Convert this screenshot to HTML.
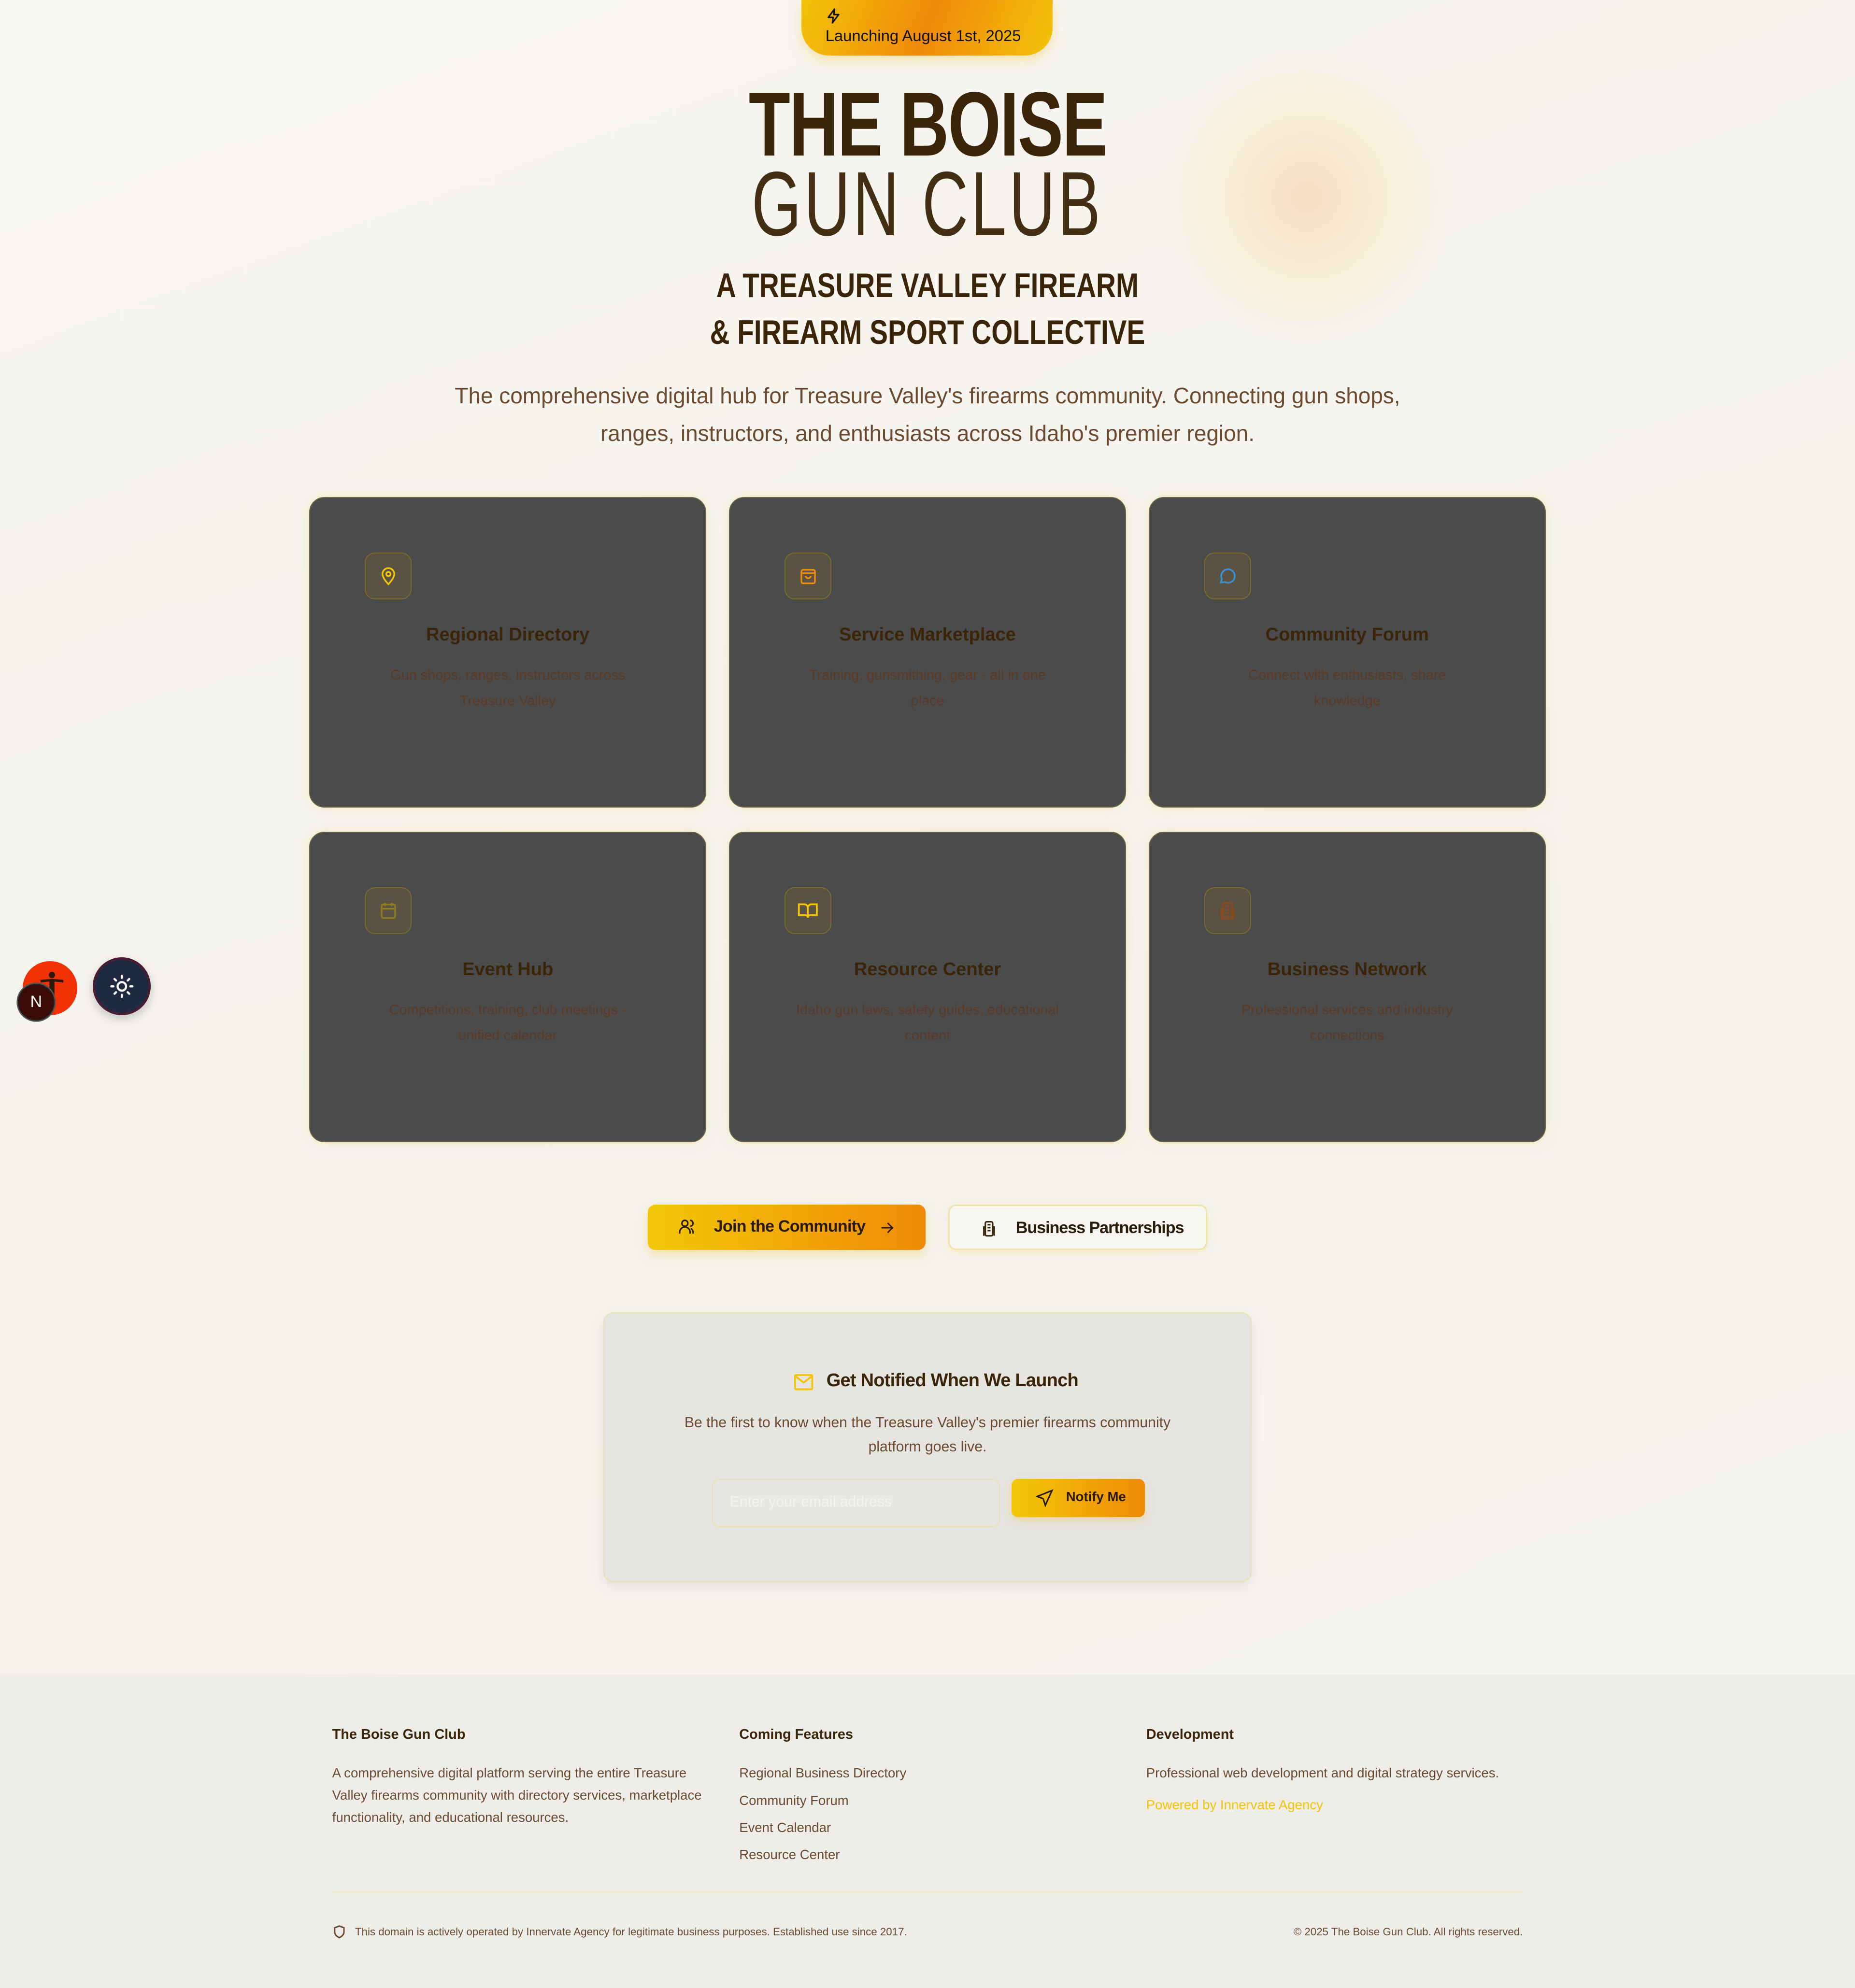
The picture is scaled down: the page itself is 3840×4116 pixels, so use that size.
<!DOCTYPE html>
<html><head><meta charset="utf-8">
<style>
*{box-sizing:border-box;margin:0;padding:0}
html,body{width:3840px;height:4116px;overflow:hidden;background:#f7f5ef}
#z{zoom:2.62474;width:1463px;height:1568px;position:relative;font-family:"Liberation Sans",sans-serif;background:linear-gradient(160deg,#f8f6f0,#f5f3ec 60%,#f7f5ef);overflow:hidden}
.abs{position:absolute}
.c{text-align:center}
.badge{left:632px;top:0;width:198px;height:44px;border-radius:0 0 22px 22px;background:linear-gradient(110deg,#f2c40a,#f08a0a 50%,#f2c40a);box-shadow:0 4px 10px rgba(240,190,40,.35)}
.sq{display:inline-block;transform-origin:center}
.card{width:313px;height:245px;background:#4b4b4b;border-radius:12px;border:1px solid #6e6440;box-shadow:0 0 8px rgba(245,220,140,.5)}
.ib{position:absolute;left:43px;top:43px;width:37px;height:37px;border-radius:8px;background:#5a5343;border:1px solid #7b6a2c;display:flex;align-items:center;justify-content:center}
.ct{position:absolute;left:0;right:0;top:100px;text-align:center;font-size:14.5px;font-weight:bold;color:#3a2508}
.cd{position:absolute;left:52px;right:52px;top:130px;text-align:center;font-size:11px;line-height:20px;color:#5a3a22}
.fh{font-size:11px;font-weight:bold;color:#3a2508}
.ft{font-size:10.5px;color:#6b4a30;line-height:17.5px}
</style></head><body><div id="z">
<div class="abs" style="left:910px;top:40px;width:240px;height:230px;border-radius:50%;background:radial-gradient(circle at 50% 50%,rgba(245,200,150,.5),rgba(248,225,170,.3) 40%,rgba(248,240,220,0) 70%)"></div>

<div class="abs badge">
<svg class="abs" style="left:19px;top:6px" width="13" height="13" viewBox="0 0 24 24" fill="none" stroke="#111" stroke-width="2.2" stroke-linejoin="round"><path d="M13 2L4 14h7l-1 8 9-12h-7z"/></svg>
<div class="abs" style="left:19px;top:21px;font-size:12.5px;color:#111;white-space:nowrap">Launching August 1st, 2025</div>
</div>

<div class="abs c" style="left:0;width:1463px;top:62px;font-size:72px;font-weight:bold;color:#3a2508;line-height:72px"><span class="sq" style="transform:scaleX(.745);letter-spacing:-1px">THE BOISE</span></div>
<div class="abs c" style="left:0;width:1463px;top:126px;font-size:72px;color:#3a2508;line-height:70px"><span class="sq" style="transform:scaleX(.7);letter-spacing:3px;font-weight:normal;-webkit-text-stroke:0;opacity:.95">GUN CLUB</span></div>

<div class="abs c" style="left:0;width:1463px;top:207px;font-size:27px;font-weight:bold;color:#3a2508;line-height:37px"><span class="sq" style="transform:scaleX(.8)">A TREASURE VALLEY FIREARM<br>&amp; FIREARM SPORT COLLECTIVE</span></div>

<div class="abs c" style="left:336px;width:791px;top:297px;font-size:17.5px;color:#6b4a30;line-height:30px">The comprehensive digital hub for Treasure Valley's firearms community. Connecting gun shops, ranges, instructors, and enthusiasts across Idaho's premier region.</div>

<!-- cards -->
<div class="abs card" style="left:244px;top:392px"><div class="ib"><svg width="16" height="16" viewBox="0 0 24 24" fill="none" stroke="#f2c40a" stroke-width="2"><path d="M12 22s-7-7-7-12a7 7 0 0 1 14 0c0 5-7 12-7 12z"/><circle cx="12" cy="10" r="2.5"/></svg></div><div class="ct">Regional Directory</div><div class="cd">Gun shops, ranges, instructors across Treasure Valley</div></div>
<div class="abs card" style="left:575px;top:392px"><div class="ib"><svg width="16" height="16" viewBox="0 0 24 24" fill="none" stroke="#f08a0a" stroke-width="2"><rect x="4" y="5" width="16" height="16" rx="2"/><path d="M4 9h16M9 12a3 3 0 0 0 6 0"/></svg></div><div class="ct">Service Marketplace</div><div class="cd">Training, gunsmithing, gear - all in one place</div></div>
<div class="abs card" style="left:906px;top:392px"><div class="ib"><svg width="16" height="16" viewBox="0 0 24 24" fill="none" stroke="#3a8fd0" stroke-width="2"><path d="M4 20l1.5-4A8 8 0 1 1 9 19.5z"/></svg></div><div class="ct">Community Forum</div><div class="cd">Connect with enthusiasts, share knowledge</div></div>
<div class="abs card" style="left:244px;top:656px"><div class="ib"><svg width="16" height="16" viewBox="0 0 24 24" fill="none" stroke="#8a7a20" stroke-width="2"><rect x="4" y="5" width="16" height="16" rx="2"/><path d="M4 10h16M8 3v4M16 3v4"/></svg></div><div class="ct">Event Hub</div><div class="cd">Competitions, training, club meetings - unified calendar</div></div>
<div class="abs card" style="left:575px;top:656px"><div class="ib"><svg width="17" height="17" viewBox="0 0 24 24" fill="none" stroke="#f2c40a" stroke-width="2"><path d="M2 5h6a4 4 0 0 1 4 4v11a3 3 0 0 0-3-3H2zM22 5h-6a4 4 0 0 0-4 4v11a3 3 0 0 1 3-3h7z"/></svg></div><div class="ct">Resource Center</div><div class="cd">Idaho gun laws, safety guides, educational content</div></div>
<div class="abs card" style="left:906px;top:656px"><div class="ib"><svg width="16" height="16" viewBox="0 0 24 24" fill="none" stroke="#8a4a20" stroke-width="2.2"><rect x="7" y="3" width="10" height="19" rx="2"/><path d="M7 10H5v10a2 2 0 0 0 2 2M17 10h2v10a2 2 0 0 1-2 2M10 7h4M10 11h4M10 15h4M10 19h4"/></svg></div><div class="ct">Business Network</div><div class="cd">Professional services and industry connections</div></div>

<!-- floating -->
<div class="abs" style="left:18px;top:758px;width:43px;height:43px;border-radius:50%;background:#f23205"></div>
<svg class="abs" style="left:29px;top:765px" width="26" height="20" viewBox="0 0 26 20"><circle cx="12" cy="4" r="2.5" fill="#2a1a08"/><path d="M3 9l9-1 9 1" stroke="#2a1a08" stroke-width="2" fill="none"/><path d="M10 8v12h4V8" fill="#2a1a08"/></svg>
<div class="abs" style="left:14px;top:776px;width:29px;height:29px;border-radius:50%;background:#3a0a04;border:1px solid #222;box-shadow:0 0 0 1px #555;color:#fff;font-size:13px;text-align:center;line-height:27px">N</div>
<div class="abs" style="left:73px;top:755px;width:46px;height:46px;border-radius:50%;background:#1e2a40;border:2px solid #4a1d35;box-shadow:0 3px 8px rgba(0,0,0,.2)"></div>
<svg class="abs" style="left:86px;top:768px" width="20" height="20" viewBox="0 0 24 24" fill="none" stroke="#fff" stroke-width="2" stroke-linecap="round"><circle cx="12" cy="12" r="4"/><path d="M12 2v2M12 20v2M2 12h2M20 12h2M5 5l1.5 1.5M17.5 17.5L19 19M5 19l1.5-1.5M17.5 6.5L19 5"/></svg>

<!-- buttons -->
<div class="abs" style="left:511px;top:950px;width:219px;height:36px;border-radius:6px;background:linear-gradient(90deg,#f2c808,#f08a08);box-shadow:0 4px 8px rgba(240,190,60,.35)">
<svg class="abs" style="left:24px;top:11px" width="14" height="14" viewBox="0 0 24 24" fill="none" stroke="#2a1a08" stroke-width="2"><circle cx="9" cy="7" r="4"/><path d="M2 21v-2a7 7 0 0 1 14 0v2M16 3a4 4 0 0 1 0 8M20 21v-2a6 6 0 0 0-3-5"/></svg>
<div class="abs" style="left:52px;top:10px;font-size:13px;font-weight:bold;color:#2a1a08;white-space:nowrap;letter-spacing:-.3px">Join the Community</div>
<svg class="abs" style="left:182px;top:12px" width="13" height="13" viewBox="0 0 24 24" fill="none" stroke="#2a1a08" stroke-width="2"><path d="M4 12h16M13 5l7 7-7 7"/></svg></div>
<div class="abs" style="left:748px;top:950px;width:204px;height:36px;border-radius:6px;background:#f8f6f0;border:1.5px solid #efe3a8;box-shadow:0 2px 6px rgba(240,220,150,.4)">
<svg class="abs" style="left:24px;top:11px" width="14" height="14" viewBox="0 0 24 24" fill="none" stroke="#3a2508" stroke-width="2"><rect x="7" y="3" width="10" height="19" rx="2"/><path d="M7 10H5v12M17 10h2v12M10 7h4M10 11h4M10 15h4"/></svg>
<div class="abs" style="left:52px;top:10px;font-size:13px;font-weight:bold;color:#2a1a08;white-space:nowrap;letter-spacing:-.4px">Business Partnerships</div></div>

<!-- notify -->
<div class="abs" style="left:476px;top:1035px;width:511px;height:213px;border-radius:8px;background:#e6e5e0;border:1px solid #ece0b0;box-shadow:0 4px 10px rgba(0,0,0,.08)">
<svg class="abs" style="left:148px;top:45px" width="18" height="18" viewBox="0 0 24 24" fill="none" stroke="#f2c40a" stroke-width="2"><rect x="3" y="5" width="18" height="15" rx="1"/><path d="M3 6l9 7 9-7"/></svg>
<div class="abs" style="left:175px;top:45px;font-size:14.5px;font-weight:bold;color:#3a2508;white-space:nowrap;letter-spacing:-.3px">Get Notified When We Launch</div>
<div class="abs c" style="left:48px;right:48px;top:77px;font-size:11.5px;line-height:19px;color:#6b4a30">Be the first to know when the Treasure Valley's premier firearms community platform goes live.</div>
<div class="abs" style="left:85px;top:131px;width:227px;height:38px;border-radius:6px;border:1px solid #eee0b0;background:#e8e7e2;font-size:11.5px;color:#f4f3ef;padding:11px 13px">Enter your email address</div>
<div class="abs" style="left:321px;top:131px;width:105px;height:30px;border-radius:5px;background:linear-gradient(90deg,#f2c808,#f08a08);box-shadow:0 3px 6px rgba(240,190,60,.35)">
<svg class="abs" style="left:19px;top:8px" width="14" height="14" viewBox="0 0 24 24" fill="none" stroke="#2a1a08" stroke-width="2"><path d="M22 2L2 10l8 3 3 9z"/></svg>
<div class="abs" style="left:43px;top:8px;font-size:10.5px;font-weight:bold;color:#2a1a08;white-space:nowrap">Notify Me</div></div>
</div>

<!-- footer -->
<div class="abs" style="left:0;top:1321px;width:1463px;height:247px;background:#eeede8">
<div class="abs fh" style="left:262px;top:41px">The Boise Gun Club</div>
<div class="abs ft" style="left:262px;top:69px;width:305px">A comprehensive digital platform serving the entire Treasure Valley firearms community with directory services, marketplace functionality, and educational resources.</div>
<div class="abs fh" style="left:583px;top:41px">Coming Features</div>
<div class="abs ft" style="left:583px;top:67px;line-height:21.5px">Regional Business Directory<br>Community Forum<br>Event Calendar<br>Resource Center</div>
<div class="abs fh" style="left:904px;top:41px">Development</div>
<div class="abs ft" style="left:904px;top:69px">Professional web development and digital strategy services.</div>
<div class="abs ft" style="left:904px;top:94px;color:#f2c40a">Powered by Innervate Agency</div>
<div class="abs" style="left:262px;top:171px;width:939px;height:1px;background:#efe6c4"></div>
<svg class="abs" style="left:262px;top:197px" width="11" height="12" viewBox="0 0 24 24" fill="none" stroke="#6b4a30" stroke-width="2.5"><path d="M12 2l8 3v7c0 5-4 8-8 10-4-2-8-5-8-10V5z"/></svg>
<div class="abs" style="left:280px;top:198px;font-size:8.5px;color:#6b4a30;white-space:nowrap">This domain is actively operated by Innervate Agency for legitimate business purposes. Established use since 2017.</div>
<div class="abs" style="right:262px;top:198px;font-size:8.5px;color:#6b4a30;white-space:nowrap">© 2025 The Boise Gun Club. All rights reserved.</div>
</div>
</div></body></html>
